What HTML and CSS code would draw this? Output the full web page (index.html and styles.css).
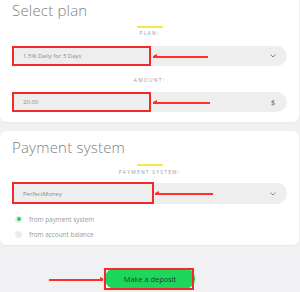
FILE: index.html
```html
<!DOCTYPE html>
<html lang="en">
<head>
    <meta charset="UTF-8">
    <meta name="viewport" content="width=device-width, initial-scale=1.0">
    <title>Deposit</title>
    <link rel="stylesheet" href="styles.css">
</head>
<body>
    <div class="card card-plan">
        <h2 class="title">Select plan</h2>

        <div class="accent"></div>
        <div class="label">Plan:</div>
        <div class="field">
            <span class="value">1.5% Daily for 5 Days</span>
            <svg class="chevron" width="6" height="4" viewBox="0 0 6 4"><path d="M0.6 0.6 L3 3 L5.4 0.6" fill="none" stroke="#777" stroke-width="0.9"/></svg>
            <div class="mark"></div>
            <div class="pointer pointer-left"></div>
        </div>

        <div class="label label-amount">Amount:</div>
        <div class="field field-amount">
            <span class="value">20.00</span>
            <span class="currency">$</span>
            <div class="mark"></div>
            <div class="pointer pointer-left pointer-long"></div>
        </div>
    </div>

    <div class="card card-pay">
        <h2 class="title">Payment system</h2>

        <div class="accent"></div>
        <div class="label label-system">Payment system:</div>
        <div class="field field-system">
            <span class="value">PerfectMoney</span>
            <svg class="chevron" width="6" height="4" viewBox="0 0 6 4"><path d="M0.6 0.6 L3 3 L5.4 0.6" fill="none" stroke="#777" stroke-width="0.9"/></svg>
            <div class="mark mark-wide"></div>
            <div class="pointer pointer-left pointer-system"></div>
        </div>

        <div class="options">
            <label class="option"><span class="radio checked"></span>from payment system</label>
            <label class="option"><span class="radio"></span>from account balance</label>
        </div>
    </div>

    <div class="actions">
        <div class="button-wrap">
            <button class="btn-deposit">Make a deposit</button>
            <div class="mark mark-btn"></div>
            <div class="pointer pointer-right"></div>
        </div>
    </div>
</body>
</html>
```

FILE: styles.css
```css
body {
    margin: 0;
    width: 300px;
    height: 292px;
    overflow: hidden;
    background: #f1f1f3;
    font-family: "Open Sans", "DejaVu Sans", sans-serif;
    color: #8a8a8a;
}

.card {
    background: #fff;
    width: 299px;
    box-sizing: border-box;
    border-radius: 6px;
    padding: 0 12px 10px 12px;
    box-shadow: 0 1px 2px rgba(0, 0, 0, 0.04);
}

.card-plan {
    border-top-left-radius: 0;
    border-top-right-radius: 0;
}

.card-pay {
    margin-top: 9px;
    padding-top: 6px;
    padding-bottom: 5px;
}

.title {
    margin: 0;
    font-size: 15px;
    line-height: 20px;
    font-weight: 300;
    color: #808080;
    letter-spacing: 0.2px;
}

.accent {
    width: 26px;
    height: 2px;
    margin: 6px auto 0 auto;
    background: #f6e84c;
}

.card-pay .accent {
    margin-top: 7px;
}

.label {
    margin-top: 1px;
    font-size: 5px;
    line-height: 8px;
    letter-spacing: 1.2px;
    text-transform: uppercase;
    text-align: center;
    color: #9a9a9a;
}

.label-amount {
    margin-top: 10px;
}

.label-system {
    margin-top: 2px;
}

.field {
    position: relative;
    margin-top: 9px;
    height: 20px;
    border-radius: 10px;
    background: #eeeeee;
    display: flex;
    align-items: center;
    justify-content: space-between;
    padding: 0 11px;
    font-size: 6px;
    color: #8c8c8c;
}

.field-amount {
    margin-top: 8px;
}

.field-system {
    margin-top: 7px;
    height: 21px;
}

.currency {
    font-size: 7px;
    font-weight: 600;
    color: #777;
    margin-right: 1px;
}

.chevron {
    display: block;
}

/* red annotation marks */
.mark {
    position: absolute;
    left: 0;
    top: 0;
    width: 139px;
    height: 20px;
    box-sizing: border-box;
    border: 2px solid #f22a2a;
}

.mark-wide {
    width: 142px;
    height: 22px;
    top: -1px;
}

.pointer {
    position: absolute;
    height: 1.5px;
    background: #ff3030;
}

.pointer::before {
    content: "";
    position: absolute;
    top: -2px;
    border-top: 2.5px solid transparent;
    border-bottom: 2.5px solid transparent;
}

.pointer-left {
    left: 141px;
    top: 10px;
    width: 55px;
}

.pointer-left::before {
    left: 0;
    border-right: 4px solid #ff3030;
}

.pointer-long {
    width: 57px;
}

.pointer-system {
    left: 143px;
    width: 58px;
}

.options {
    margin-top: 9px;
    display: flex;
    flex-direction: column;
    gap: 3px;
}

.option {
    display: flex;
    align-items: center;
    height: 12px;
    font-size: 6.4px;
    color: #999;
}

.radio {
    width: 7px;
    height: 7px;
    border-radius: 50%;
    background: #ececec;
    margin: 0 7px 0 3px;
    position: relative;
}

.radio.checked::after {
    content: "";
    position: absolute;
    left: 1.5px;
    top: 1.5px;
    width: 4px;
    height: 4px;
    border-radius: 50%;
    background: #1ed760;
}

.actions {
    display: flex;
    justify-content: center;
    margin-top: 23px;
}

.button-wrap {
    position: relative;
}

.btn-deposit {
    display: block;
    width: 90px;
    height: 21px;
    border: none;
    border-radius: 10px;
    background: #1dd75c;
    color: #24402e;
    font-family: "Open Sans", "DejaVu Sans", sans-serif;
    font-size: 7.4px;
    font-weight: 500;
    padding: 0;
}

.mark-btn {
    width: 90px;
    height: 22px;
    left: -1px;
    top: 0;
}

.pointer-right {
    left: -56px;
    top: 11px;
    width: 54px;
}

.pointer-right::before {
    right: -1px;
    border-left: 4px solid #ff3030;
}
```
